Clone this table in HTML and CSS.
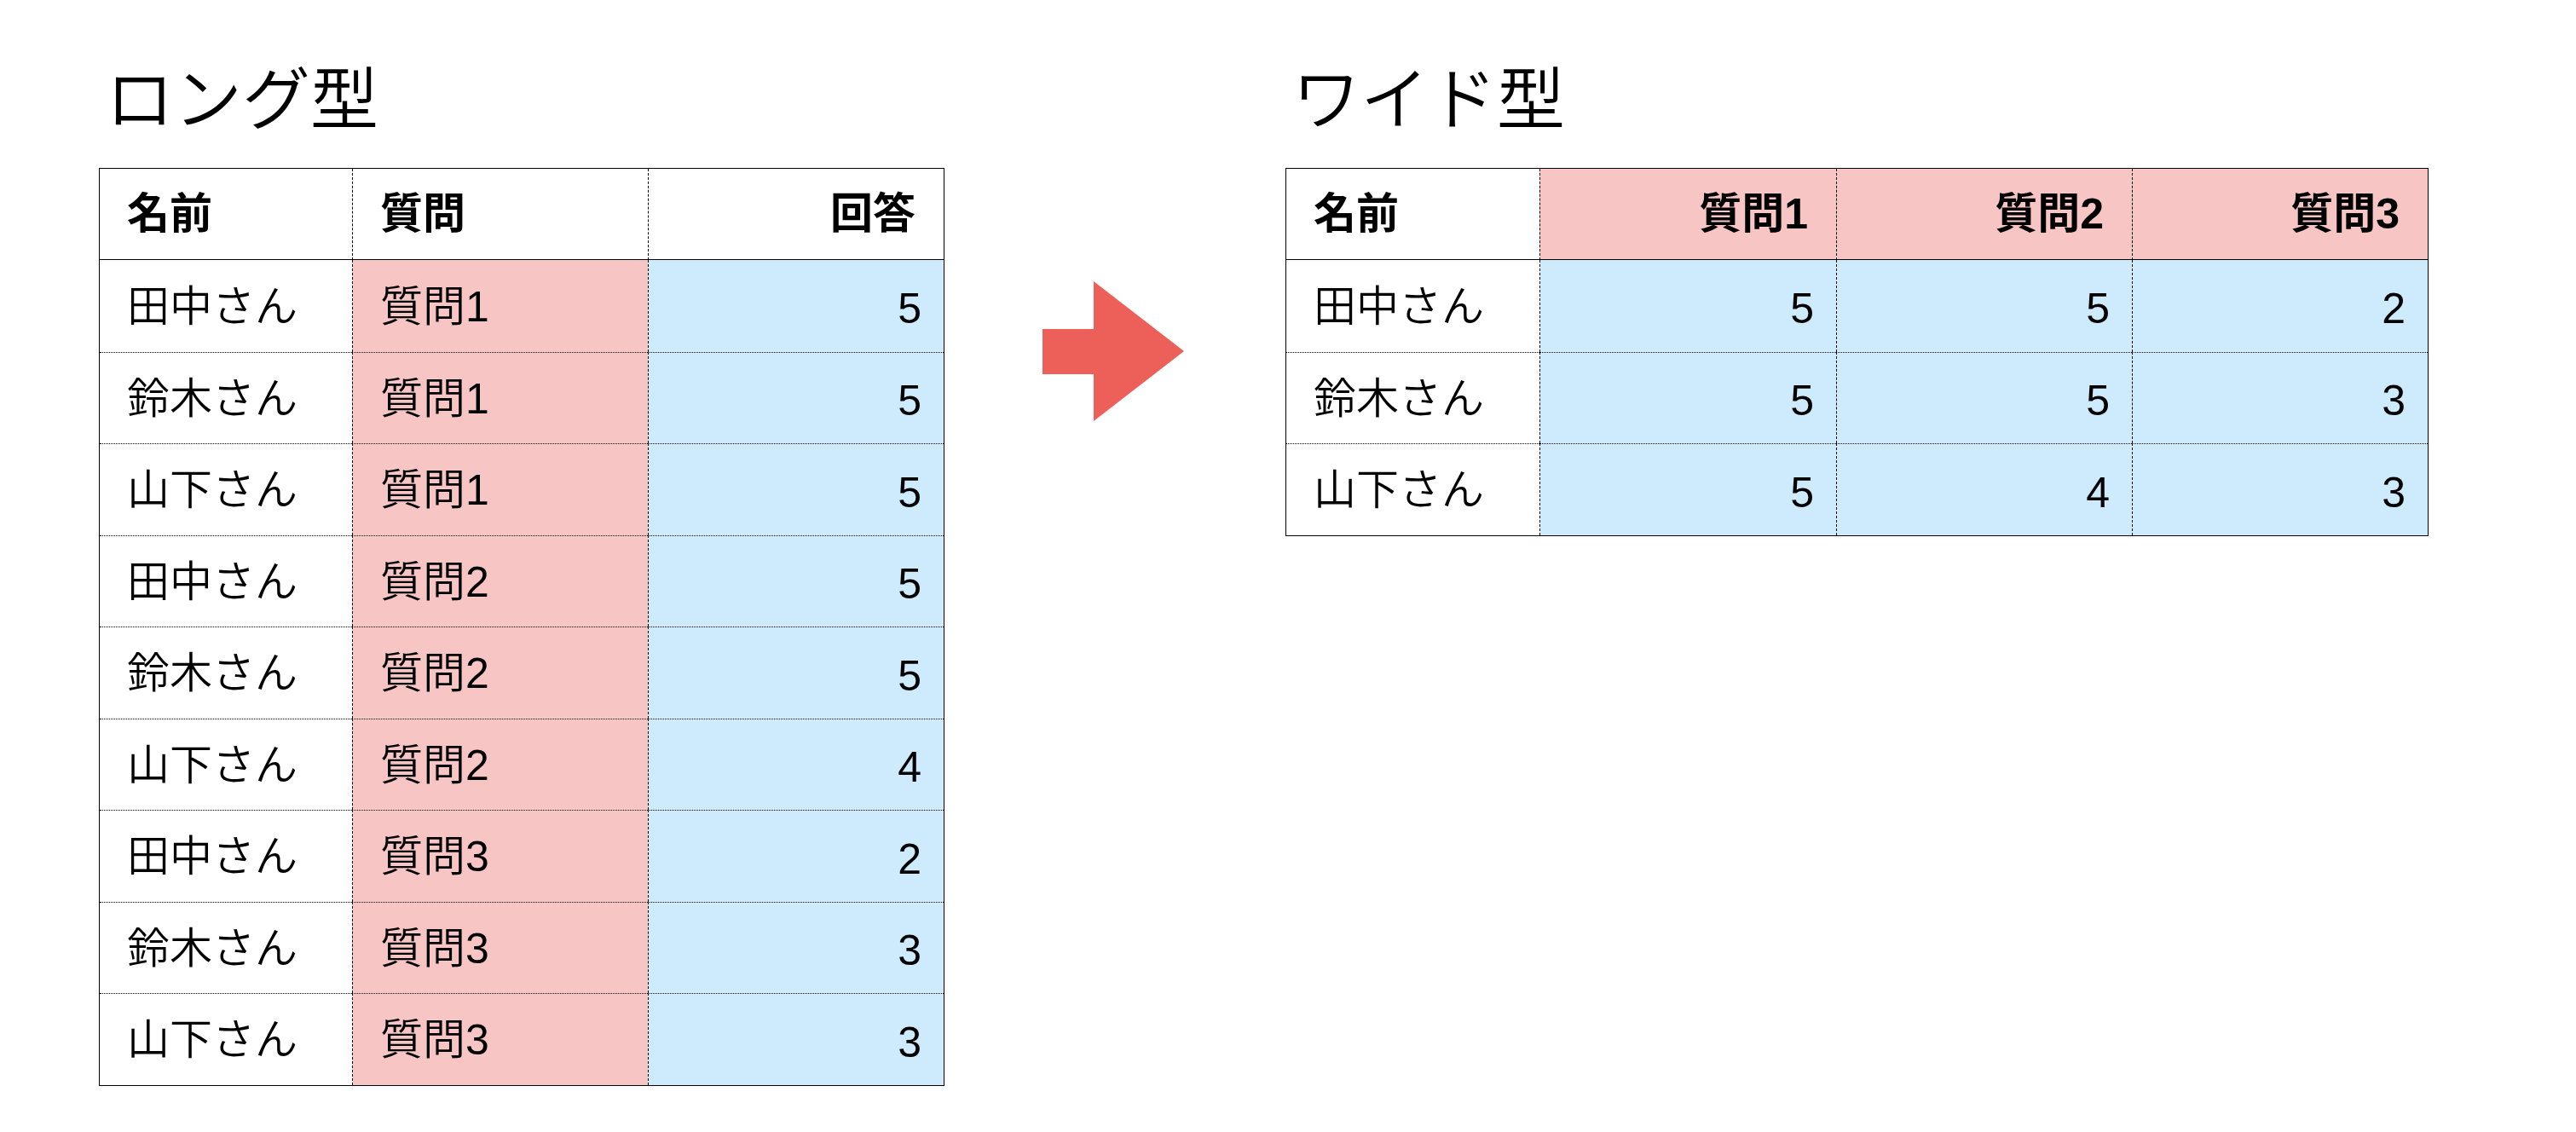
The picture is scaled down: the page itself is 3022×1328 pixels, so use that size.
FILE: index.html
```html
<!DOCTYPE html>
<html lang="ja">
<head>
<meta charset="utf-8">
<title>ロング型とワイド型</title>
<link rel="stylesheet" href="styles.css">
</head>
<body>
<div class="page">
  <section class="section">
    <h1 class="title">ロング型</h1>
    <div class="table long">
      <div class="cell head">名前</div>
      <div class="cell head col">質問</div>
      <div class="cell head col num">回答</div>

      <div class="cell first">田中さん</div>
      <div class="cell first col pink">質問1</div>
      <div class="cell first col blue num">5</div>

      <div class="cell">鈴木さん</div>
      <div class="cell col pink">質問1</div>
      <div class="cell col blue num">5</div>

      <div class="cell">山下さん</div>
      <div class="cell col pink">質問1</div>
      <div class="cell col blue num">5</div>

      <div class="cell">田中さん</div>
      <div class="cell col pink">質問2</div>
      <div class="cell col blue num">5</div>

      <div class="cell">鈴木さん</div>
      <div class="cell col pink">質問2</div>
      <div class="cell col blue num">5</div>

      <div class="cell">山下さん</div>
      <div class="cell col pink">質問2</div>
      <div class="cell col blue num">4</div>

      <div class="cell">田中さん</div>
      <div class="cell col pink">質問3</div>
      <div class="cell col blue num">2</div>

      <div class="cell">鈴木さん</div>
      <div class="cell col pink">質問3</div>
      <div class="cell col blue num">3</div>

      <div class="cell">山下さん</div>
      <div class="cell col pink">質問3</div>
      <div class="cell col blue num">3</div>
    </div>
  </section>

  <svg class="arrow" width="166" height="164" viewBox="0 0 166 164" aria-hidden="true">
    <polygon points="0,56 60,56 60,0 166,82 60,164 60,109 0,109" fill="#ED5F59"/>
  </svg>

  <section class="section">
    <h1 class="title">ワイド型</h1>
    <div class="table wide">
      <div class="cell head">名前</div>
      <div class="cell head col pink num">質問1</div>
      <div class="cell head col pink num">質問2</div>
      <div class="cell head col pink num">質問3</div>

      <div class="cell first">田中さん</div>
      <div class="cell first col blue num">5</div>
      <div class="cell first col blue num">5</div>
      <div class="cell first col blue num">2</div>

      <div class="cell">鈴木さん</div>
      <div class="cell col blue num">5</div>
      <div class="cell col blue num">5</div>
      <div class="cell col blue num">3</div>

      <div class="cell">山下さん</div>
      <div class="cell col blue num">5</div>
      <div class="cell col blue num">4</div>
      <div class="cell col blue num">3</div>
    </div>
  </section>
</div>
</body>
</html>
```

FILE: styles.css
```css
html, body {
  margin: 0;
  padding: 0;
  background: #ffffff;
}

body {
  font-family: "Liberation Sans", "Noto Sans CJK JP", sans-serif;
  color: #000000;
}

.page {
  display: flex;
  align-items: flex-start;
  padding: 78px 0 0 116px;
}

.section {
  display: flex;
  flex-direction: column;
}

.title {
  margin: 0 0 39px 8px;
  font-size: 80px;
  line-height: 80px;
  height: 80px;
  font-weight: 350;
}

.arrow {
  flex: none;
  display: block;
  margin: 252px 119px 0 115px;
}

.table {
  display: grid;
  border: 1px solid #000;
}

.long {
  width: 992px;
  box-sizing: border-box;
  grid-template-columns: 296px 347px 347px;
}

.wide {
  width: 1341px;
  box-sizing: border-box;
  grid-template-columns: 297px 348px 347px 347px;
}

.cell {
  box-sizing: border-box;
  display: flex;
  align-items: center;
  height: 107.5px;
  padding: 2px 26px 0 32px;
  font-size: 50px;
  line-height: 1;
  font-weight: 350;
  border-top: 1px dotted #000;
  white-space: nowrap;
}

.cell.head {
  height: 107px;
  padding-top: 0;
  border-top: none;
  border-bottom: 1px solid #000;
  font-weight: 700;
  padding-right: 33px;
}

.cell.first {
  border-top: none;
}

.cell.col {
  border-left: 1px dashed #000;
}

.cell.num {
  justify-content: flex-end;
}

.cell.blue.num {
  padding-top: 7px;
}

.pink {
  background: #F7C5C3;
}

.blue {
  background: #CDEBFC;
}
```
